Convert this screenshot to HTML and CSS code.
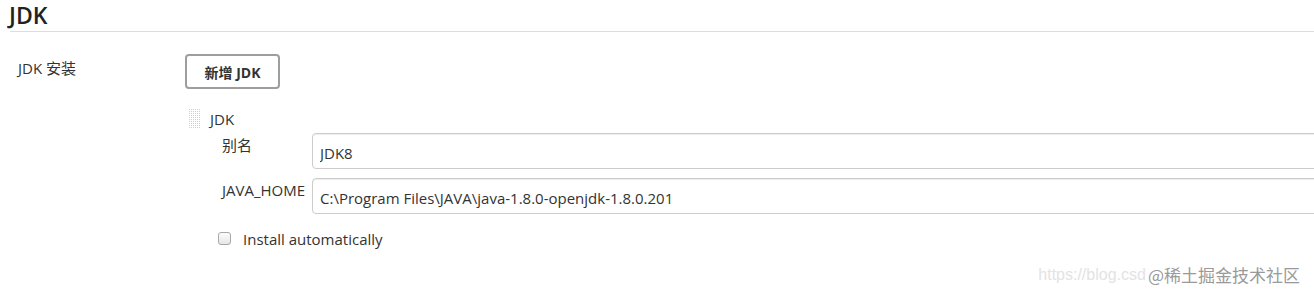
FILE: index.html
```html
<!DOCTYPE html>
<html>
<head>
<meta charset="utf-8">
<link rel="stylesheet" href="styles.css">
</head>
<body>
<div class="page">
  <div class="section-title">JDK</div>
  <div class="row">
    <div class="row-label">JDK 安装</div>
    <div class="row-body">
      <button class="btn">新增 JDK</button>
      <div class="repeated">
        <div class="handle"></div>
        <div class="chunk">
          <div class="chunk-title">JDK</div>
          <div class="fields">
            <div class="field-label">别名</div>
            <input class="text-input" type="text" value="JDK8">
            <div class="field-label">JAVA_HOME</div>
            <input class="text-input" type="text" value="C:\Program Files\JAVA\java-1.8.0-openjdk-1.8.0.201">
          </div>
          <label class="check-row"><span class="checkbox"></span><span>Install automatically</span></label>
        </div>
      </div>
    </div>
  </div>
  <div class="watermark"><span class="wm-url">https://blog.csd</span><span class="wm-brand">@稀土掘金技术社区</span></div>
</div>
</body>
</html>
```
FILE: styles.css
```css
* { box-sizing: border-box; }
html, body { margin: 0; padding: 0; background: #fff; }
body {
  font-family: "Open Sans", "Noto Sans", "Noto Sans CJK SC", sans-serif;
  color: #333;
  font-size: 15px;
  width: 1314px;
  height: 297px;
  overflow: hidden;
}
.page { position: relative; height: 297px; overflow: hidden; }
.section-title {
  margin-left: 10px;
  font-size: 23px;
  font-weight: 600;
  line-height: 30px;
  height: 32px;
  color: #222;
  border-bottom: 1px solid #ddd;
  text-indent: -1px;
}
.row {
  display: flex;
  padding-top: 22px;
}
.row-label {
  flex: 0 0 185px;
  width: 185px;
  padding-left: 18px;
  line-height: 20px;
  padding-top: 4px;
}
.row-body { flex: 1; min-width: 0; }
.btn {
  display: block;
  width: 95px;
  height: 35px;
  border: 2px solid #9e9e9e;
  border-radius: 4px;
  background: #fff;
  font-family: inherit;
  font-size: 14px;
  font-weight: 700;
  color: #333;
  padding: 0;
}
.repeated {
  display: flex;
  margin-top: 17px;
}
.handle {
  flex: 0 0 13px;
  height: 21px;
  margin-left: 3px;
  margin-right: 9px;
  margin-top: 2px;
  background:
    linear-gradient(90deg, #fff 1px, transparent 1px) 0 0 / 2px 2px,
    linear-gradient(#fff 1px, #cfcfcf 1px) 0 0 / 2px 2px;
}
.chunk { flex: 1; min-width: 0; }
.chunk-title { line-height: 20px; height: 20px; margin-top: 3px; }
.fields {
  display: grid;
  grid-template-columns: 90px 1fr;
  row-gap: 9px;
  margin-left: 12px;
  margin-top: 4px;
}
.field-label { line-height: 20px; padding-top: 2px; }
.text-input {
  height: 36px;
  width: 110%;
  border: 1px solid #ccc;
  border-radius: 4px 0 0 4px;
  box-shadow: inset 0 1px 1px rgba(0,0,0,0.075);
  font-family: inherit;
  font-size: 15px;
  color: #333;
  padding: 4px 7px 0 7px;
  background: #fff;
}
.check-row {
  display: flex;
  align-items: center;
  margin-left: 8px;
  margin-top: 15px;
  line-height: 20px;
}
.checkbox {
  flex: 0 0 13px;
  height: 13px;
  border: 1px solid #a8a8a8;
  border-radius: 3px;
  background: linear-gradient(#fdfdfd, #e6e6e6);
  margin-right: 12px;
  margin-top: -2px;
}
.watermark {
  position: absolute;
  right: 14px;
  top: 262px;
  display: flex;
  align-items: center;
  white-space: nowrap;
}
.wm-url {
  font-family: "Liberation Sans", sans-serif;
  font-size: 16px;
  color: #e3e3e3;
  margin-right: 2px;
}
.wm-brand {
  font-family: "Noto Sans CJK SC", sans-serif;
  font-size: 17px;
  color: #9a9a9a;
}
```
